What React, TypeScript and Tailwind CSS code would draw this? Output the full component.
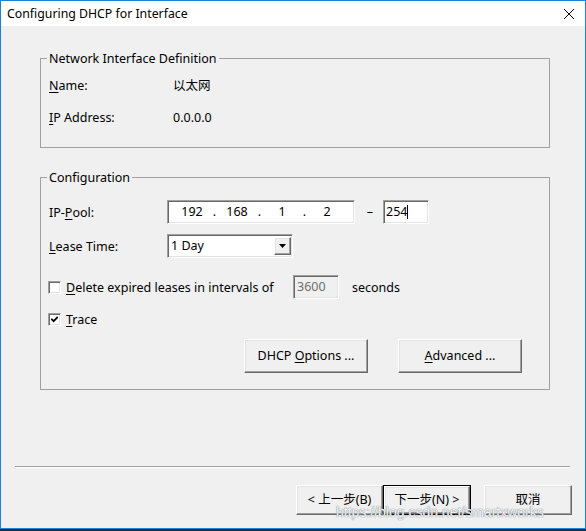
import React from 'react';

const raised =
  'border border-t-white border-l-white border-r-[#696969] border-b-[#696969] shadow-[inset_-1px_-1px_0_#a0a0a0,inset_1px_1px_0_#e3e3e3] bg-[#f0f0f0]';
const sunken =
  'border border-t-[#a0a0a0] border-l-[#a0a0a0] border-r-white border-b-white shadow-[inset_1px_1px_0_#696969,inset_-1px_-1px_0_#e3e3e3]';

function U({ children }: { children: React.ReactNode }) {
  return <span className="underline underline-offset-[2px] decoration-1">{children}</span>;
}

function Checkbox({ checked }: { checked?: boolean }) {
  return (
    <div className={`w-[13px] h-[13px] bg-white flex items-center justify-center shrink-0 ${sunken}`}>
      {checked && (
        <svg width="7" height="7" viewBox="0 0 7 7">
          <path d="M0.3 2.8 L2.6 5.2 L6.8 0.8" stroke="#000" strokeWidth="1.8" fill="none" />
        </svg>
      )}
    </div>
  );
}

function Group({ title, children, className }: { title: string; children: React.ReactNode; className?: string }) {
  return (
    <fieldset className={`ml-[39px] w-[510px] border border-[#a0a0a0] ${className ?? ''}`}>
      <legend className="ml-[6px] px-[2px] leading-[15px]">{title}</legend>
      {children}
    </fieldset>
  );
}

export default function App() {
  return (
    <div className="w-[586px] h-[531px] bg-[#1b2b3b] relative overflow-hidden font-['Noto_Sans','Noto_Sans_CJK_SC',sans-serif] text-[12.5px] text-black">
      <div className="h-[529px] border border-[#1883d7] bg-[#f0f0f0] flex flex-col">
        {/* title bar */}
        <div className="h-[25px] bg-white flex items-center justify-between shrink-0">
          <span className="ml-[6px] text-[12.3px] leading-[16px]">Configuring DHCP for Interface</span>
          <svg className="mr-[11px]" width="10" height="10" viewBox="0 0 10 10">
            <path d="M0 0 L10 10 M10 0 L0 10" stroke="#000" strokeWidth="1" />
          </svg>
        </div>

        <Group title="Network Interface Definition" className="mt-[25px]">
          <div className="grid grid-cols-[124px_1fr] pl-[8px] pt-[12px] pb-[22px] gap-y-[17px] leading-[15px]">
            <span><U>N</U>ame:</span>
            <span>以太网</span>
            <span><U>I</U>P Address:</span>
            <span>0.0.0.0</span>
          </div>
        </Group>

        <Group title="Configuration" className="mt-[22px]">
          <div className="flex flex-col pl-[8px] pt-[15px] pb-[16px]">
            <div className="flex items-center h-[24px]">
              <span className="w-[118px] leading-[15px]">IP-<U>P</U>ool:</span>
              <div className={`w-[188px] h-[24px] bg-white flex items-center pl-[7px] ${sunken}`}>
                {['192', '168', '1', '2'].map((n, i) => (
                  <React.Fragment key={i}>
                    {i > 0 && <span className="w-[11px] text-center">.</span>}
                    <span className="w-[34px] text-center">{n}</span>
                  </React.Fragment>
                ))}
              </div>
              <span className="w-[28px] pl-[2px] text-center">–</span>
              <div className={`w-[46px] h-[24px] bg-white flex items-center pl-[2px] ${sunken}`}>
                <span>254</span>
                <span className="w-px h-[14px] bg-black" />
              </div>
            </div>

            <div className="flex items-center h-[24px] mt-[10px]">
              <span className="w-[118px] leading-[15px]"><U>L</U>ease Time:</span>
              <div className={`w-[126px] h-[24px] bg-white flex items-center justify-between ${sunken}`}>
                <span className="pl-[3px]">1 Day</span>
                <div className={`w-[17px] h-[18px] mr-[1px] flex items-center justify-center ${raised}`}>
                  <svg width="7" height="4" viewBox="0 0 7 4">
                    <path d="M0 0 H7 L3.5 4 Z" fill="#000" />
                  </svg>
                </div>
              </div>
            </div>

            <div className="flex items-center h-[24px] mt-[17px] -ml-[1px]">
              <Checkbox />
              <span className="ml-[5px] w-[227px] leading-[15px]"><U>D</U>elete expired leases in intervals of</span>
              <div className={`w-[46px] h-[24px] bg-[#f0f0f0] flex items-center pl-[3px] text-[#6d6d6d] ${sunken}`}>3600</div>
              <span className="ml-[13px] leading-[15px]">seconds</span>
            </div>

            <div className="flex items-center h-[15px] mt-[13px] -ml-[1px]">
              <Checkbox checked />
              <span className="ml-[5px] leading-[15px]"><U>T</U>race</span>
            </div>

            <div className="flex gap-[30px] ml-[195px] mt-[12px]">
              <button className={`w-[124px] h-[34px] ${raised}`}>DHCP <U>O</U>ptions ...</button>
              <button className={`w-[124px] h-[34px] ${raised}`}><U>A</U>dvanced ...</button>
            </div>
          </div>
        </Group>

        <div className="ml-[14px] w-[555px] mt-[76px] border-t border-[#a0a0a0] border-b border-b-white" />

        <div className="flex justify-end pr-[13px] mt-[17px]">
          <button className={`w-[87px] h-[30px] ${raised}`}>&lt; 上一步(B)</button>
          <button className="w-[88px] h-[30px] border border-black">
            <span className={`flex items-center justify-center w-full h-full ${raised}`}>下一步(N) &gt;</span>
          </button>
          <button className={`w-[88px] h-[30px] ml-[13px] ${raised}`}>取消</button>
        </div>
      </div>

      <span className="absolute left-[336px] top-[504px] text-[14px] leading-[16px] font-['Liberation_Sans',sans-serif] text-white/90 [text-shadow:0_0_1px_#7d8690,0_0_1px_#7d8690]">
        https://blog.csdn.net/smartxworks
      </span>
    </div>
  );
}
